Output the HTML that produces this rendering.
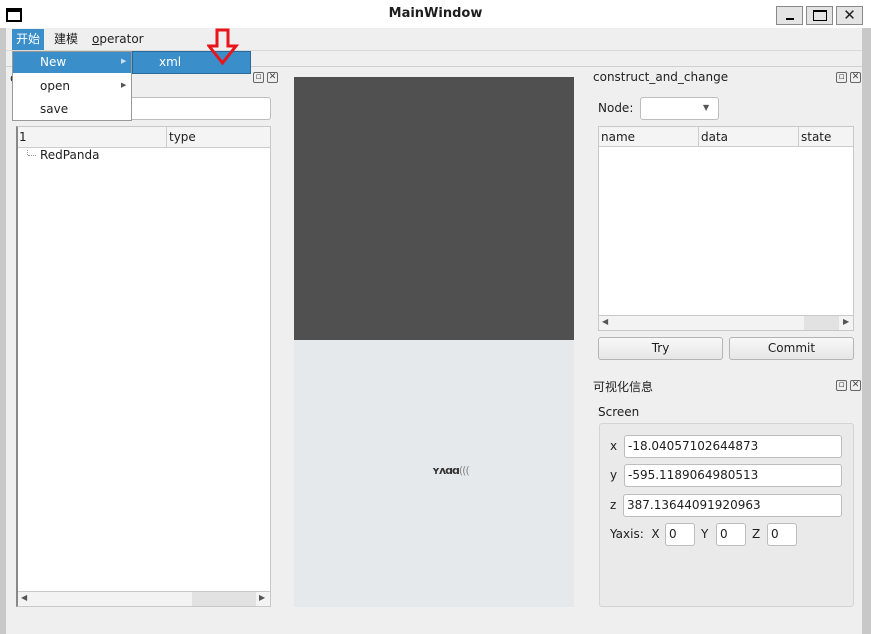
<!DOCTYPE html>
<html><head><meta charset="utf-8"><style>
*{box-sizing:border-box;margin:0;padding:0}
body{width:871px;height:634px;overflow:hidden;background:#efefef;font-family:"DejaVu Sans","Noto Sans CJK SC",sans-serif;font-size:12px;color:#1e1e1e;position:relative}
.a{position:absolute}
.le{position:absolute;background:#fff;border:1px solid #bdbdbd;border-radius:3px;padding-left:3px;line-height:21px}
.btn{position:absolute;border:1px solid #b4b4b4;border-radius:3px;background:linear-gradient(#f8f8f8,#e6e6e6);text-align:center;line-height:21px}
.ic{position:absolute;width:11px;height:11px;border:1px solid #666;border-radius:2px;font-size:9px;line-height:9px;text-align:center;color:#444}
.wb{position:absolute;top:6px;width:27px;height:19px;border:1px solid #8a8a8a;background:#e4e4e4}
</style></head><body>
<div class="a" style="left:0;top:0;width:871px;height:28px;background:#fff"></div>
<div class="a" style="left:6px;top:8px;width:16px;height:14px;border:2px solid #000;border-top-width:4px"></div>
<div class="a" style="left:0;top:6px;width:871px;text-align:center;font-weight:bold;font-size:13px">MainWindow</div>
<div class="wb" style="left:776px"><div class="a" style="left:9px;top:11px;width:8px;height:2px;background:#000"></div></div>
<div class="wb" style="left:806px"><div class="a" style="left:6px;top:3px;width:14px;height:11px;border:1px solid #000;border-top-width:2px"></div></div>
<div class="wb" style="left:836px;text-align:center;font-weight:bold;font-size:15px;line-height:17px">✕</div>
<div class="a" style="left:0;top:28px;width:6px;height:606px;background:#c8c8c8"></div>
<div class="a" style="left:862px;top:28px;width:9px;height:606px;background:#c8c8c8"></div>
<div class="a" style="left:6px;top:28px;width:856px;height:606px;background:#efefef"></div>
<!-- menubar -->
<div class="a" style="left:12px;top:29px;width:32px;height:22px;background:#3a8fca;color:#fff;line-height:21px;padding-left:4px">开始</div>
<div class="a" style="left:54px;top:29px;line-height:21px">建模</div>
<div class="a" style="left:92px;top:29px;line-height:21px"><u>o</u>perator</div>
<div class="a" style="left:6px;top:50px;width:856px;height:1px;background:#d8d8d8"></div>
<div class="a" style="left:6px;top:66px;width:856px;height:1px;background:#d0d0d0"></div>
<!-- left dock -->
<div class="a" style="left:10px;top:71px">c</div>
<div class="ic" style="left:253px;top:72px">▫</div><div class="ic" style="left:267px;top:72px">✕</div>
<div class="le" style="left:16px;top:97px;width:255px;height:23px"></div>
<div class="a" style="left:16px;top:126px;width:255px;height:481px;background:#fff;border:1px solid #c8c8c8;border-left:2px solid #888"></div>
<div class="a" style="left:18px;top:127px;width:252px;height:21px;background:#f4f4f4;border-bottom:1px solid #ccc"></div>
<div class="a" style="left:19px;top:130px">1</div>
<div class="a" style="left:166px;top:127px;width:1px;height:21px;background:#ccc"></div>
<div class="a" style="left:169px;top:130px">type</div>
<div class="a" style="left:27px;top:150px;width:1px;height:5px;border-left:1px dotted #999"></div>
<div class="a" style="left:28px;top:155px;width:8px;border-top:1px dotted #999"></div>
<div class="a" style="left:40px;top:148px">RedPanda</div>
<div class="a" style="left:18px;top:591px;width:252px;height:15px;background:#f3f3f3;border-top:1px solid #c8c8c8"></div>
<div class="a" style="left:192px;top:592px;width:64px;height:14px;background:#e2e2e2"></div>
<div class="a" style="left:21px;top:593px;font-size:8px;color:#555">◀</div>
<div class="a" style="left:259px;top:593px;font-size:8px;color:#555">▶</div>
<!-- center -->
<div class="a" style="left:294px;top:77px;width:280px;height:263px;background:#505050"></div>
<div class="a" style="left:294px;top:340px;width:280px;height:267px;background:#e6e9ec"></div>
<div class="a" style="left:432px;top:464px;font-size:11px;color:#333;letter-spacing:-1px;font-weight:bold">ʏʌɑɑ<span style="font-weight:normal;color:#888">(((</span></div>
<!-- right dock -->
<div class="a" style="left:593px;top:70px">construct_and_change</div>
<div class="ic" style="left:836px;top:72px">▫</div><div class="ic" style="left:850px;top:72px">✕</div>
<div class="a" style="left:598px;top:101px">Node:</div>
<div class="le" style="left:640px;top:97px;width:79px;height:23px"><span class="a" style="left:62px;top:-1px;font-size:8px;color:#555">▼</span></div>
<div class="a" style="left:598px;top:126px;width:256px;height:205px;background:#fff;border:1px solid #c8c8c8"></div>
<div class="a" style="left:599px;top:127px;width:254px;height:20px;background:#f4f4f4;border-bottom:1px solid #ccc"></div>
<div class="a" style="left:601px;top:130px">name</div>
<div class="a" style="left:698px;top:127px;width:1px;height:20px;background:#ccc"></div>
<div class="a" style="left:701px;top:130px">data</div>
<div class="a" style="left:798px;top:127px;width:1px;height:20px;background:#ccc"></div>
<div class="a" style="left:801px;top:130px">state</div>
<div class="a" style="left:599px;top:315px;width:254px;height:15px;background:#f3f3f3;border-top:1px solid #c8c8c8"></div>
<div class="a" style="left:804px;top:316px;width:35px;height:14px;background:#e2e2e2"></div>
<div class="a" style="left:602px;top:317px;font-size:8px;color:#555">◀</div>
<div class="a" style="left:843px;top:317px;font-size:8px;color:#555">▶</div>
<div class="btn" style="left:598px;top:337px;width:125px;height:23px">Try</div>
<div class="btn" style="left:729px;top:337px;width:125px;height:23px">Commit</div>
<div class="a" style="left:593px;top:378px">可视化信息</div>
<div class="ic" style="left:836px;top:380px">▫</div><div class="ic" style="left:850px;top:380px">✕</div>
<div class="a" style="left:598px;top:405px">Screen</div>
<div class="a" style="left:599px;top:423px;width:255px;height:184px;border:1px solid #d4d4d4;border-radius:3px;background:#eaeaea"></div>
<div class="a" style="left:610px;top:439px">x</div>
<div class="le" style="left:624px;top:435px;width:218px;height:23px">-18.04057102644873</div>
<div class="a" style="left:610px;top:468px">y</div>
<div class="le" style="left:624px;top:464px;width:218px;height:23px">-595.1189064980513</div>
<div class="a" style="left:610px;top:498px">z</div>
<div class="le" style="left:623px;top:494px;width:219px;height:23px">387.13644091920963</div>
<div class="a" style="left:610px;top:527px">Yaxis:&nbsp; X</div>
<div class="le" style="left:665px;top:523px;width:30px;height:23px">0</div>
<div class="a" style="left:701px;top:527px">Y</div>
<div class="le" style="left:716px;top:523px;width:30px;height:23px">0</div>
<div class="a" style="left:752px;top:527px">Z</div>
<div class="le" style="left:767px;top:523px;width:30px;height:23px">0</div>
<!-- menu popup -->
<div class="a" style="left:12px;top:51px;width:120px;height:70px;background:#fff;border:1px solid #999"></div>
<div class="a" style="left:13px;top:52px;width:118px;height:21px;background:#3a8fca"></div>
<div class="a" style="left:40px;top:55px;color:#fff">New</div>
<div class="a" style="left:121px;top:57px;font-size:7px;color:#cde">▶</div>
<div class="a" style="left:40px;top:79px">open</div>
<div class="a" style="left:121px;top:81px;font-size:7px;color:#555">▶</div>
<div class="a" style="left:40px;top:102px">save</div>
<div class="a" style="left:132px;top:51px;width:119px;height:23px;background:#3a8fca;border:1px solid #2a6a9a"></div>
<div class="a" style="left:159px;top:55px;color:#fff">xml</div>
<!-- red arrow -->
<svg class="a" style="left:207px;top:28px" width="34" height="38" viewBox="0 0 34 38"><path d="M10 2H21V18H29L15.5 35L2 18H10Z" fill="none" stroke="#e8151b" stroke-width="3"/></svg>
</body></html>
